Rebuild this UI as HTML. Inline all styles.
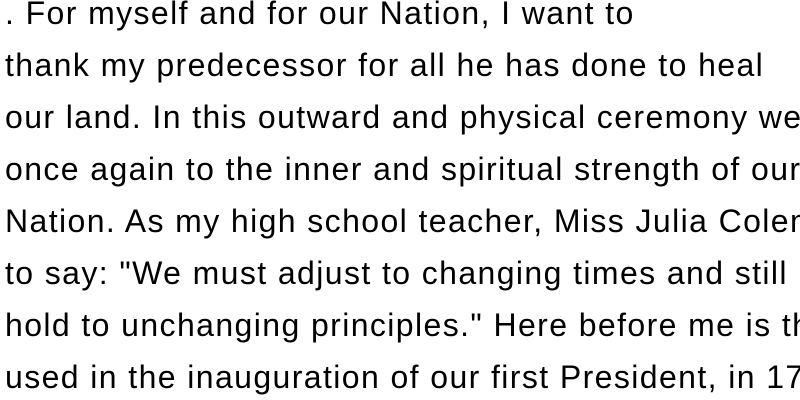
<!DOCTYPE html>
<html><head><meta charset="utf-8"><style>
html,body{margin:0;padding:0;background:#fff;width:800px;height:400px;overflow:hidden}
.w{position:absolute;left:0;top:0;width:800px;height:400px;overflow:hidden}
.t{position:absolute;left:5px;top:-13px;font-family:"Liberation Sans",sans-serif;font-size:32px;line-height:52px;color:#000;white-space:nowrap;letter-spacing:1.4px}
</style></head><body>
<div class="w"><div class="t">. For myself and for our Nation, I want to<br>thank my predecessor for all he has done to heal<br>our land. In this outward and physical ceremony we<br>once again to the inner and spiritual strength of our<br>Nation. As my high school teacher, Miss Julia Coleman<br>to say: "We must adjust to changing times and still<br>hold to unchanging principles." Here before me is the<br>used in the inauguration of our first President, in 1789</div></div>
</body></html>
